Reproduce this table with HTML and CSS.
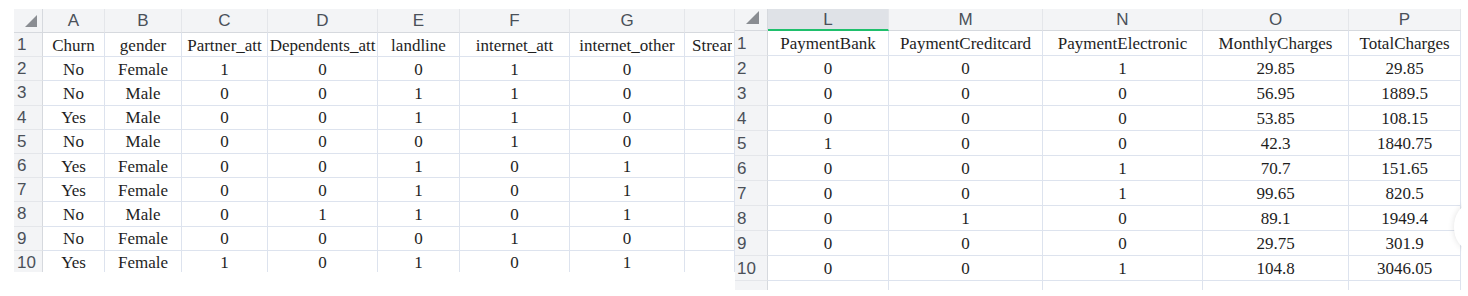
FILE: index.html
```html
<!DOCTYPE html>
<html>
<head>
<meta charset="utf-8">
<link rel="stylesheet" href="styles.css">
</head>
<body>
<div class="page">
  <div class="sheet sheet-left">
    <div class="hd corner"><span class="tri"></span></div>
    <div class="hd col">A</div><div class="hd col">B</div><div class="hd col">C</div><div class="hd col">D</div><div class="hd col">E</div><div class="hd col">F</div><div class="hd col">G</div><div class="hd col"></div>

    <div class="hd row">1</div><div class="c">Churn</div><div class="c">gender</div><div class="c">Partner_att</div><div class="c">Dependents_att</div><div class="c">landline</div><div class="c">internet_att</div><div class="c">internet_other</div><div class="c c-left"><span class="clip">Stream</span></div>
    <div class="hd row">2</div><div class="c">No</div><div class="c">Female</div><div class="c">1</div><div class="c">0</div><div class="c">0</div><div class="c">1</div><div class="c">0</div><div class="c"></div>
    <div class="hd row">3</div><div class="c">No</div><div class="c">Male</div><div class="c">0</div><div class="c">0</div><div class="c">1</div><div class="c">1</div><div class="c">0</div><div class="c"></div>
    <div class="hd row">4</div><div class="c">Yes</div><div class="c">Male</div><div class="c">0</div><div class="c">0</div><div class="c">1</div><div class="c">1</div><div class="c">0</div><div class="c"></div>
    <div class="hd row">5</div><div class="c">No</div><div class="c">Male</div><div class="c">0</div><div class="c">0</div><div class="c">0</div><div class="c">1</div><div class="c">0</div><div class="c"></div>
    <div class="hd row">6</div><div class="c">Yes</div><div class="c">Female</div><div class="c">0</div><div class="c">0</div><div class="c">1</div><div class="c">0</div><div class="c">1</div><div class="c"></div>
    <div class="hd row">7</div><div class="c">Yes</div><div class="c">Female</div><div class="c">0</div><div class="c">0</div><div class="c">1</div><div class="c">0</div><div class="c">1</div><div class="c"></div>
    <div class="hd row">8</div><div class="c">No</div><div class="c">Male</div><div class="c">0</div><div class="c">1</div><div class="c">1</div><div class="c">0</div><div class="c">1</div><div class="c"></div>
    <div class="hd row">9</div><div class="c">No</div><div class="c">Female</div><div class="c">0</div><div class="c">0</div><div class="c">0</div><div class="c">1</div><div class="c">0</div><div class="c"></div>
    <div class="hd row">10</div><div class="c">Yes</div><div class="c">Female</div><div class="c">1</div><div class="c">0</div><div class="c">1</div><div class="c">0</div><div class="c">1</div><div class="c"></div>
  </div>

  <div class="sheet sheet-right">
    <div class="hd corner"><span class="tri"></span></div>
    <div class="hd col sel">L</div><div class="hd col">M</div><div class="hd col">N</div><div class="hd col">O</div><div class="hd col">P</div>

    <div class="hd row">1</div><div class="c">PaymentBank</div><div class="c">PaymentCreditcard</div><div class="c">PaymentElectronic</div><div class="c">MonthlyCharges</div><div class="c">TotalCharges</div>
    <div class="hd row">2</div><div class="c">0</div><div class="c">0</div><div class="c">1</div><div class="c">29.85</div><div class="c">29.85</div>
    <div class="hd row">3</div><div class="c">0</div><div class="c">0</div><div class="c">0</div><div class="c">56.95</div><div class="c">1889.5</div>
    <div class="hd row">4</div><div class="c">0</div><div class="c">0</div><div class="c">0</div><div class="c">53.85</div><div class="c">108.15</div>
    <div class="hd row">5</div><div class="c">1</div><div class="c">0</div><div class="c">0</div><div class="c">42.3</div><div class="c">1840.75</div>
    <div class="hd row">6</div><div class="c">0</div><div class="c">0</div><div class="c">1</div><div class="c">70.7</div><div class="c">151.65</div>
    <div class="hd row">7</div><div class="c">0</div><div class="c">0</div><div class="c">1</div><div class="c">99.65</div><div class="c">820.5</div>
    <div class="hd row">8</div><div class="c">0</div><div class="c">1</div><div class="c">0</div><div class="c">89.1</div><div class="c">1949.4</div>
    <div class="hd row">9</div><div class="c">0</div><div class="c">0</div><div class="c">0</div><div class="c">29.75</div><div class="c">301.9</div>
    <div class="hd row">10</div><div class="c">0</div><div class="c">0</div><div class="c">1</div><div class="c">104.8</div><div class="c">3046.05</div>
    <div class="hd row blank"></div><div class="c"></div><div class="c"></div><div class="c"></div><div class="c"></div><div class="c"></div>
    <span class="fab"></span>
  </div>
</div>
</body>
</html>
```

FILE: styles.css
```css
html, body {
  margin: 0;
  padding: 0;
  background: #ffffff;
}

.page {
  display: flex;
  align-items: flex-start;
  padding: 9px 0 0 14px;
  width: 1468px;
  height: 296px;
  box-sizing: border-box;
  overflow: hidden;
}

.sheet {
  display: grid;
  overflow: hidden;
  flex: none;
  position: relative;
}

.sheet-left {
  width: 721px;
  height: 263px;
  grid-template-columns: 29px 62px 77px 86px 110px 82px 110px 115px 50px;
  grid-template-rows: 24px;
  grid-auto-rows: 24.2px;
}

.sheet-right {
  width: 727px;
  height: 281px;
  grid-template-columns: 33px 121px 154px 160px 146px 112px;
  grid-template-rows: 22px;
  grid-auto-rows: 25px;
}

.hd {
  background: #f3f4f6;
  color: #4a5059;
  font-family: "Liberation Sans", Arial, sans-serif;
  font-size: 17px;
  line-height: 1;
  display: flex;
  align-items: center;
  box-sizing: border-box;
  white-space: nowrap;
  overflow: hidden;
}

.hd.col {
  justify-content: center;
  border-right: 1px solid #e4e6ea;
  border-bottom: 1px solid #d6d9de;
}

.hd.col.sel {
  background: #dfe2e7;
  border-bottom: 2px solid #1fbf6c;
}

.hd.row {
  justify-content: flex-start;
  padding-left: 3px;
  font-size: 17px;
  border-right: 1px solid #d6d9de;
  border-bottom: 1px solid #e4e6ea;
}

.sheet-right .hd.row {
  padding-left: 2px;
}

.hd.corner {
  position: relative;
  border-right: 1px solid #d6d9de;
  border-bottom: 1px solid #d6d9de;
}

.tri {
  position: absolute;
  right: 5px;
  bottom: 5px;
  width: 0;
  height: 0;
  border-style: solid;
  border-width: 0 0 12px 12px;
  border-color: transparent transparent #8a8d92 transparent;
}

.sheet-right .tri {
  right: 8px;
  bottom: 6px;
  border-width: 0 0 13px 13px;
}

.c {
  font-family: "Liberation Serif", "Times New Roman", serif;
  font-size: 17px;
  color: #1e1e1e;
  line-height: 1;
  display: flex;
  align-items: center;
  justify-content: center;
  white-space: nowrap;
  overflow: hidden;
  box-sizing: border-box;
  border-right: 1px solid #dde3ee;
  border-bottom: 1px solid #dde3ee;
  padding-top: 1px;
}

.c.c-left {
  justify-content: flex-start;
  padding-left: 7px;
}

.clip {
  display: block;
  overflow: hidden;
  max-width: 40px;
}

.fab {
  position: absolute;
  right: -22px;
  top: 196px;
  width: 30px;
  height: 44px;
  border-radius: 50%;
  background: #ffffff;
  box-shadow: 0 0 6px rgba(0, 0, 0, 0.12);
}
```
